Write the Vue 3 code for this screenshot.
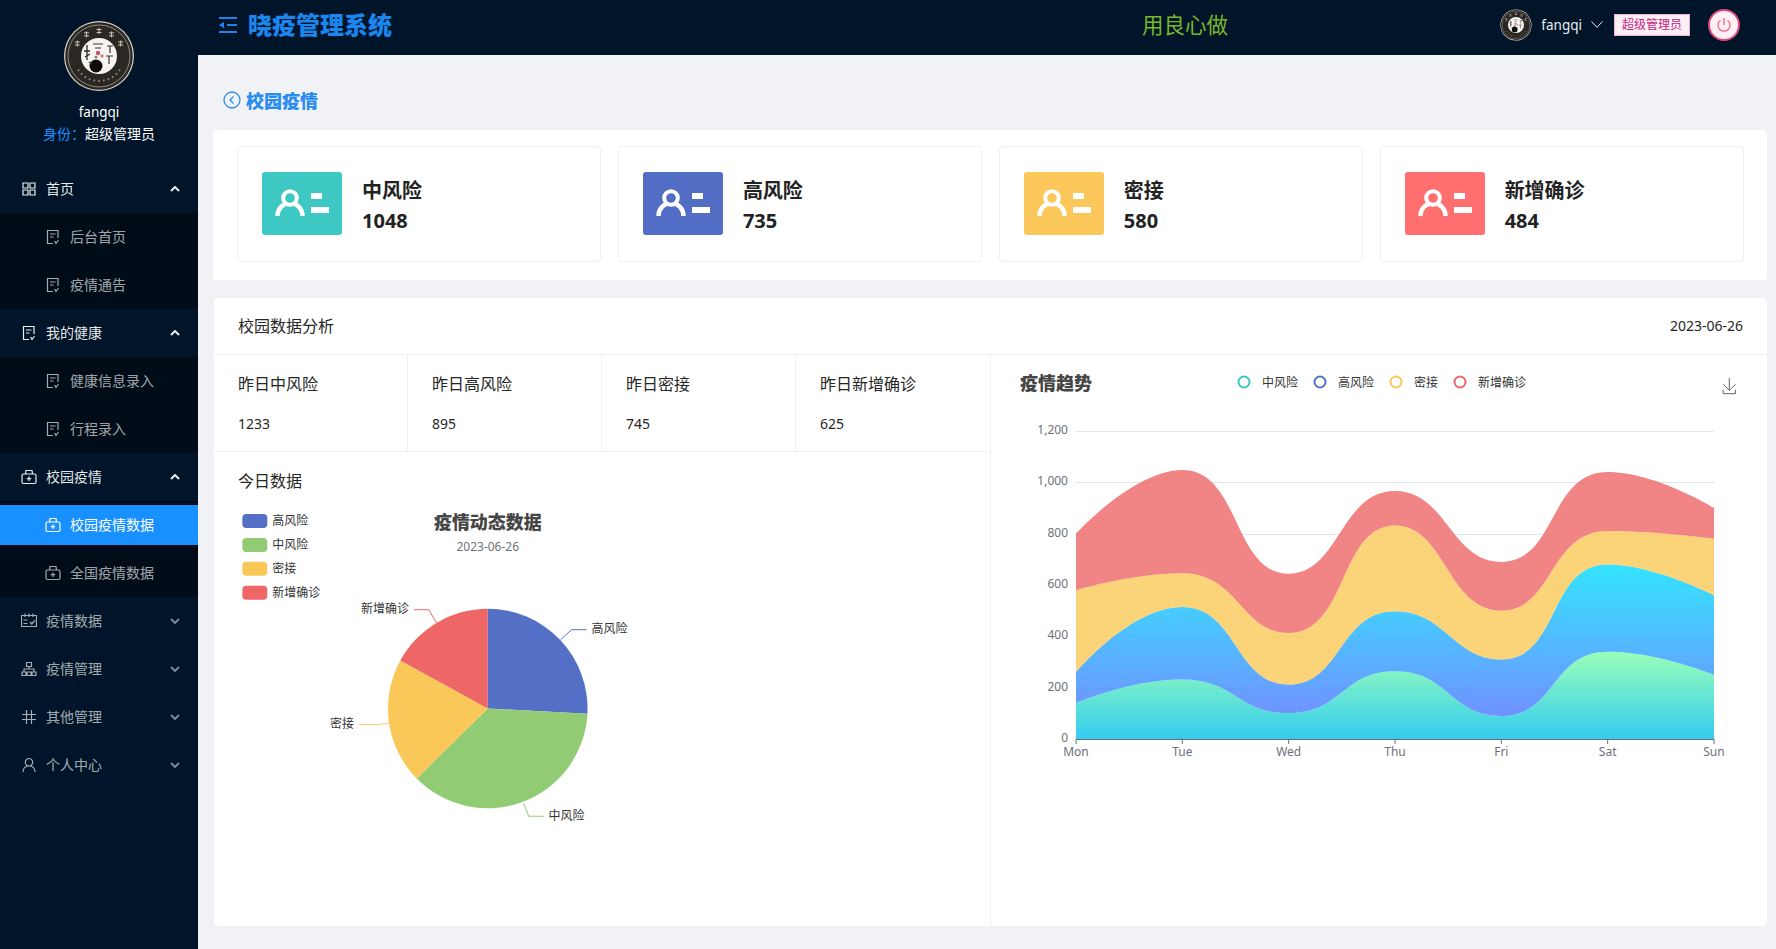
<template>
  <div class="app">
    <svg width="0" height="0" class="defs">
      <symbol id="logo" viewBox="0 0 72 72">
        <circle cx="36" cy="36" r="35" fill="#d8d4cc" />
        <circle cx="36" cy="36" r="33.800" fill="#2b2723" />
        <circle cx="36" cy="36" r="31" fill="none" stroke="#b9b4aa" stroke-width="0.7" />
        <path v-for="m in logoMarks" :key="m.id" :d="m.d" fill="none" stroke="#c9c4b8" stroke-width="1" />
        <circle v-for="d in logoDots" :key="d.id" :cx="d.x" :cy="d.y" r="1" fill="#8f8a80" />
        <circle cx="36" cy="36" r="18" fill="#f7f5f0" />
        <circle cx="33" cy="46" r="6.500" fill="#0d0c0b" />
        <path d="M24 25v15M21 31h6M22 37l5-3M26 42l3 2" stroke="#2e2a26" stroke-width="1.300" fill="none" />
        <path d="M44 26h6M47 26v7M43 36h7M46 36v8" stroke="#3a352f" stroke-width="1.200" fill="none" />
        <path d="M30 24h10M32 28h6" stroke="#3a352f" stroke-width="1" fill="none" />
        <circle cx="35" cy="33" r="2.200" fill="#b9566a" />
        <circle cx="39" cy="36" r="1.800" fill="#c9848f" />
        <circle cx="33" cy="37" r="1.600" fill="#6d9a63" />
      </symbol>
    </svg>

    <aside class="sidebar">
      <div class="profile">
        <svg class="profile-logo"><use href="#logo" /></svg>
        <div class="profile-name">fangqi</div>
        <div class="profile-role"><span>身份：</span>超级管理员</div>
      </div>

      <template v-for="group in menu" :key="group.title">
        <div class="menu-row" :class="{ open: group.children }">
          <svg class="menu-icon" viewBox="0 0 16 16"><path :d="icons[group.icon]" /></svg>
          <span>{{ group.title }}</span>
          <svg class="chevron" viewBox="0 0 10 6"><path :d="group.children ? 'M1 5l4-4 4 4' : 'M1 1l4 4 4-4'" /></svg>
        </div>
        <div v-if="group.children" class="submenu">
          <div
            v-for="child in group.children"
            :key="child"
            class="sub-row"
            :class="{ active: child === '校园疫情数据' }"
          >
            <svg class="menu-icon" viewBox="0 0 16 16"><path :d="icons[group.icon2 || group.icon]" /></svg>
            <span>{{ child }}</span>
          </div>
        </div>
      </template>
    </aside>

    <div class="right">
      <header class="topbar">
        <svg class="fold" viewBox="0 0 18 16">
          <path d="M0 1h18M8 8h10M0 15h18" />
          <path class="fold-arrow" d="M0 8l5-3.200v6.400z" />
        </svg>
        <h1 class="sys-title">晓疫管理系统</h1>
        <div class="slogan">用良心做</div>
        <div class="user">
          <svg class="user-logo"><use href="#logo" /></svg>
          <span class="user-name">fangqi</span>
          <svg class="user-arrow" viewBox="0 0 12 7"><path d="M.5.5L6 6.300 11.500 .5" /></svg>
          <span class="role-tag">超级管理员</span>
          <div class="power">
            <svg viewBox="0 0 16 16"><path d="M8 1v7M4.500 3.300a6 6 0 1 0 7 0" /></svg>
          </div>
        </div>
      </header>

      <main class="main">
        <div class="page-title">
          <svg viewBox="0 0 18 18">
            <circle cx="9" cy="9" r="8" />
            <path d="M10.500 5.500L7 9l3.500 3.500" />
          </svg>
          <span>校园疫情</span>
        </div>

        <section class="panel stat-panel">
          <div v-for="s in stats" :key="s.name" class="stat-card">
            <div class="stat-tile" :class="s.tone">
              <svg viewBox="0 0 80 62">
                <path class="tile-body" d="M15.500 44a12.500 13 0 0 1 25 0" />
                <circle class="tile-head" cx="28" cy="26" r="6.800" />
                <rect x="49" y="21" width="11" height="6" fill="#fff" />
                <rect x="49" y="35" width="18" height="6" fill="#fff" />
              </svg>
            </div>
            <div>
              <div class="stat-name">{{ s.name }}</div>
              <div class="stat-value">{{ s.value }}</div>
            </div>
          </div>
        </section>

        <section class="panel analysis">
          <div class="analysis-head">
            <span>校园数据分析</span>
            <span class="analysis-date">2023-06-26</span>
          </div>
          <div class="analysis-body">
            <div class="analysis-left">
              <div class="yesterday">
                <div v-for="y in yesterday" :key="y.name" class="y-cell">
                  <div class="y-name">{{ y.name }}</div>
                  <div class="y-value">{{ y.value }}</div>
                </div>
              </div>
              <div class="today-title">今日数据</div>
              <svg class="pie-chart" viewBox="214 500 777 426">
                <g v-for="(l, i) in pieSlices" :key="l.name">
                  <rect x="242" :y="513 + i * 24" width="25" height="14" rx="4" :fill="l.color" />
                  <text x="272" :y="520 + i * 24" class="t12 mid">{{ l.name }}</text>
                </g>
                <text x="488" y="521" class="chart-title mid" text-anchor="middle">疫情动态数据</text>
                <text x="488" y="546" class="t12 mid grey" text-anchor="middle">2023-06-26</text>
                <path v-for="l in pieSlices" :key="l.name" :d="l.d" :fill="l.color" />
                <g v-for="l in pieSlices" :key="l.name + 'label'">
                  <path :d="l.line" fill="none" :stroke="l.color" stroke-width="1" />
                  <text :x="l.lx" :y="l.ly" class="t12 mid" :text-anchor="l.anchor">{{ l.name }}</text>
                </g>
              </svg>
            </div>

            <svg class="trend-chart" viewBox="991 355 776 571">
              <defs>
                <linearGradient id="areaGreen" x1="0" y1="0" x2="0" y2="1">
                  <stop offset="0" stop-color="rgb(128,255,165)" />
                  <stop offset="1" stop-color="rgb(1,191,236)" />
                </linearGradient>
                <linearGradient id="areaBlue" x1="0" y1="0" x2="0" y2="1">
                  <stop offset="0" stop-color="rgb(0,221,255)" />
                  <stop offset="1" stop-color="rgb(77,119,255)" />
                </linearGradient>
              </defs>
              <text x="1020" y="383" class="chart-title mid">疫情趋势</text>
              <g v-for="l in trendLegend" :key="l.name">
                <circle :cx="l.x" cy="382" r="5.500" fill="#fff" :stroke="l.color" stroke-width="2" />
                <text :x="l.x + 18" y="382" class="t12 mid">{{ l.name }}</text>
              </g>
              <path
                class="download"
                transform="translate(1722 378) scale(0.25 0.27)"
                d="M4.700,22.900L29.300,45.500L54.700,23.400M4.600,43.600L4.600,58L53.800,58L53.800,43.600M29.200,45.100L29.200,0"
              />
              <g v-for="t in yTicks" :key="t.label">
                <line v-if="t.value" x1="1076" :y1="t.y" x2="1714" :y2="t.y" stroke="#e0e6f1" />
                <text x="1068" :y="t.y - 2" class="t12 mid grey" text-anchor="end">{{ t.label }}</text>
              </g>
              <path v-for="a in areas" :key="a.id" :d="a.d" :fill="a.fill" opacity="0.8" />
              <line x1="1076" y1="739.500" x2="1714" y2="739.500" stroke="#6e7079" />
              <g v-for="t in xTicks" :key="t.label">
                <line :x1="t.x" y1="739" :x2="t.x" y2="744" stroke="#6e7079" />
                <text :x="t.x" y="751" class="t12 mid grey" text-anchor="middle">{{ t.label }}</text>
              </g>
            </svg>
          </div>
        </section>
      </main>
    </div>
  </div>
</template>

<script setup>
const icons = {
  grid: "M2 2h5v5H2zM9 2h5v5H9zM2 9h5v5H2zM9 9h5v5H9z",
  doc: "M13 9V1.500H2.500v13H8M5 5h5.500M5 8h3.500M9.500 12l1.500 2.500 2.500-3.500",
  bag: "M2.500 5h11a1.500 1.500 0 0 1 1.500 1.500v6.500a1.500 1.500 0 0 1-1.500 1.500h-11A1.500 1.500 0 0 1 1 13V6.500A1.500 1.500 0 0 1 2.500 5zM4.500 5l.5-3.500h6l.5 3.500M8 7.500v4.500M5.800 9.700h4.400",
  schedule: "M.5 2.500h15v11H.5zM4 .5v3.500M8 .5v3.500M12 .5v3.500M2.500 7h4M2.500 10.500h4M9 9l1.800 2 3-3.500",
  tree: "M5.500 1.500h5v4h-5zM8 5.500V8M3 11V8h10v3M1 11h4v3.500H1zM6 11h4v3.500H6zM11 11h4v3.500h-4z",
  hash: "M5.500 1v14M10.500 1v14M1 5.500h14M1 10.500h14",
  user: "M8 1.500a3.700 3.700 0 1 1 0 7.400 3.700 3.700 0 0 1 0-7.400zM2 15c0-3.800 2.700-6.100 6-6.100s6 2.300 6 6.100",
};

const menu = [
  { title: "首页", icon: "grid", icon2: "doc", children: ["后台首页", "疫情通告"] },
  { title: "我的健康", icon: "doc", children: ["健康信息录入", "行程录入"] },
  { title: "校园疫情", icon: "bag", children: ["校园疫情数据", "全国疫情数据"] },
  { title: "疫情数据", icon: "schedule" },
  { title: "疫情管理", icon: "tree" },
  { title: "其他管理", icon: "hash" },
  { title: "个人中心", icon: "user" },
];

const stats = [
  { name: "中风险", value: 1048, tone: "teal" },
  { name: "高风险", value: 735, tone: "blue" },
  { name: "密接", value: 580, tone: "yellow" },
  { name: "新增确诊", value: 484, tone: "red" },
];

const yesterday = [
  { name: "昨日中风险", value: 1233 },
  { name: "昨日高风险", value: 895 },
  { name: "昨日密接", value: 745 },
  { name: "昨日新增确诊", value: 625 },
];

// little crosses standing in for the seal characters on the logo ring
const logoMarks = [-150, -120, -90, -60, -30].map((deg, i) => {
  const a = (deg * Math.PI) / 180;
  const x = 36 + Math.cos(a) * 25;
  const y = 36 + Math.sin(a) * 25;
  return {
    id: i,
    d: `M${x - 2.5} ${y - 1.5}h5M${x - 2.5} ${y + 1.5}h5M${x} ${y - 3}v6`,
  };
});
const logoDots = Array.from({ length: 11 }, (_, i) => {
  const a = ((35 + i * 11) * Math.PI) / 180;
  return { id: i, x: 36 + Math.cos(a) * 25, y: 36 + Math.sin(a) * 25 };
});

// pie
const cx = 488;
const cy = 708;
const radius = 100;
const pieData = [
  { name: "高风险", value: 735, color: "#5470c6", line: "M561 639L572 629H587", lx: 592, ly: 628, anchor: "start" },
  { name: "中风险", value: 1048, color: "#91cc75", line: "M524 803L529 816H544", lx: 549, ly: 815, anchor: "start" },
  { name: "密接", value: 580, color: "#fac858", line: "M389 723L375 724H359", lx: 354, ly: 723, anchor: "end" },
  { name: "新增确诊", value: 484, color: "#ee6666", line: "M437 623L429 609H414", lx: 409, ly: 608, anchor: "end" },
];
const pieTotal = pieData.reduce((sum, p) => sum + p.value, 0);
let pieAngle = -Math.PI / 2;
const pieSlices = pieData.map((p) => {
  const start = pieAngle;
  pieAngle += (p.value / pieTotal) * Math.PI * 2;
  const large = pieAngle - start > Math.PI ? 1 : 0;
  const d =
    `M${cx} ${cy}L${cx + radius * Math.cos(start)} ${cy + radius * Math.sin(start)}` +
    `A${radius} ${radius} 0 ${large} 1 ${cx + radius * Math.cos(pieAngle)} ${cy + radius * Math.sin(pieAngle)}Z`;
  return { ...p, d };
});

// stacked area
const x0 = 1076;
const xStep = (1714 - 1076) / 6;
const yZero = 739;
const yPerUnit = 308 / 1200;
const toY = (v) => yZero - v * yPerUnit;

const days = ["Mon", "Tue", "Wed", "Thu", "Fri", "Sat", "Sun"];
const xTicks = days.map((label, i) => ({ label, x: x0 + i * xStep }));
const yTicks = [0, 200, 400, 600, 800, 1000, 1200].map((value) => ({
  value,
  label: value.toLocaleString("en-US"),
  y: Math.round(toY(value)) + 0.5,
}));

const trendLegend = [
  { name: "中风险", color: "#3cc8c2", x: 1244 },
  { name: "高风险", color: "#5470c6", x: 1320 },
  { name: "密接", color: "#fac858", x: 1396 },
  { name: "新增确诊", color: "#ee6666", x: 1460 },
];

const clamp = (v, a, b) => Math.min(Math.max(v, Math.min(a, b)), Math.max(a, b));

// same control points a smooth line gets in the chart library the original used
function smoothSegments(pts, smooth = 0.5) {
  let out = "";
  let cp0x = pts[0][0];
  let cp0y = pts[0][1];
  for (let i = 1; i < pts.length; i++) {
    const [x, y] = pts[i];
    const [px, py] = pts[i - 1];
    let cp1x = x;
    let cp1y = y;
    let nextX = x;
    let nextY = y;
    const next = pts[i + 1];
    if (next) {
      const lenPrev = Math.hypot(x - px, y - py);
      const lenNext = Math.hypot(next[0] - x, next[1] - y);
      const ratio = lenNext / (lenNext + lenPrev);
      const vx = next[0] - px;
      const vy = next[1] - py;
      nextX = clamp(x + vx * smooth * ratio, x, next[0]);
      nextY = clamp(y + vy * smooth * ratio, y, next[1]);
      cp1x = clamp(x - ((nextX - x) * lenPrev) / lenNext, px, x);
      cp1y = clamp(y - ((nextY - y) * lenPrev) / lenNext, py, y);
      nextX = x + ((x - cp1x) * lenNext) / lenPrev;
      nextY = y + ((y - cp1y) * lenNext) / lenPrev;
    }
    out += `C${cp0x} ${cp0y} ${cp1x} ${cp1y} ${x} ${y}`;
    cp0x = nextX;
    cp0y = nextY;
  }
  return out;
}

const series = [
  { data: [140, 232, 101, 264, 90, 340, 250], fill: "url(#areaGreen)" },
  { data: [120, 282, 111, 234, 220, 340, 310], fill: "url(#areaBlue)" },
  { data: [320, 132, 201, 334, 190, 130, 220], fill: "#fac858" },
  { data: [220, 402, 231, 134, 190, 230, 120], fill: "#ee6666" },
];

const stacked = [];
series.forEach((s, si) => {
  stacked.push(s.data.map((v, i) => v + (si ? stacked[si - 1][i] : 0)));
});

const areas = series.map((s, si) => {
  const top = stacked[si].map((v, i) => [x0 + i * xStep, toY(v)]);
  const bottom = si
    ? stacked[si - 1].map((v, i) => [x0 + i * xStep, toY(v)]).reverse()
    : [[1714, yZero], [x0, yZero]];
  const back = si ? smoothSegments(bottom) : `L${x0} ${yZero}`;
  return {
    id: si,
    fill: s.fill,
    d: `M${top[0][0]} ${top[0][1]}${smoothSegments(top)}L${bottom[0][0]} ${bottom[0][1]}${back}Z`,
  };
});
</script>

<style scoped>
.app {
  display: flex;
  height: 949px;
  overflow: hidden;
  font-family: "Noto Sans", "Noto Sans CJK SC", sans-serif;
  font-size: 14px;
  color: #262626;
  background: #f0f2f5;
}
.defs {
  position: absolute;
}

/* sidebar */
.sidebar {
  width: 198px;
  flex-shrink: 0;
  background: #001529;
  color: rgba(255, 255, 255, 0.65);
}
.profile {
  height: 165px;
  padding-top: 20px;
  box-sizing: border-box;
  text-align: center;
  line-height: 22px;
  color: #fff;
}
.profile-logo {
  display: block;
  width: 72px;
  height: 72px;
  margin: 0 auto 9px;
}
.profile-name {
  font-size: 13.500px;
}
.profile-role span {
  color: #1890ff;
}
.menu-row {
  display: flex;
  align-items: center;
  height: 48px;
  padding-left: 21px;
}
.menu-row span,
.sub-row span {
  margin-bottom: 2px;
}
.menu-row.open {
  color: rgba(255, 255, 255, 0.92);
}
.menu-icon {
  width: 16px;
  height: 16px;
  margin-right: 9px;
  flex-shrink: 0;
  fill: none;
  stroke: currentColor;
  stroke-width: 1.200;
}
.chevron {
  width: 10px;
  height: 6px;
  margin-left: auto;
  margin-right: 18px;
  fill: none;
  stroke: currentColor;
  stroke-width: 2;
  opacity: 0.75;
}
.menu-row.open .chevron {
  opacity: 1;
}
.submenu {
  display: flex;
  flex-direction: column;
  background: #000c17;
}
.sub-row {
  display: flex;
  align-items: center;
  height: 40px;
  margin: 4px 0;
  padding-left: 45px;
}
.sub-row.active {
  background: #1890ff;
  color: #fff;
}

/* top bar */
.right {
  flex: 1;
  min-width: 0;
  display: flex;
  flex-direction: column;
}
.topbar {
  display: flex;
  align-items: center;
  box-sizing: border-box;
  height: 55px;
  flex-shrink: 0;
  padding: 0 36px 6px 21px;
  background: #001529;
}
.fold {
  width: 18px;
  height: 16px;
  margin-right: 11px;
  fill: none;
  stroke: #1c84e8;
  stroke-width: 2;
}
.fold-arrow {
  fill: #1c84e8;
  stroke: none;
}
.sys-title {
  margin: 0;
  font-size: 24px;
  line-height: 49px;
  font-weight: 900;
  color: #1a86ee;
}
.slogan {
  margin: 0 0 2px 750px;
  font-size: 21.500px;
  color: #79b52a;
}
.user {
  display: flex;
  align-items: center;
  margin-left: auto;
}
.user-logo {
  width: 32px;
  height: 32px;
  margin-right: 9px;
}
.user-name {
  font-size: 13.500px;
  color: #e8edf2;
}
.user-arrow {
  width: 12px;
  height: 7px;
  margin: 0 11px 0 9px;
  fill: none;
  stroke: #e8edf2;
}
.role-tag {
  box-sizing: border-box;
  width: 76px;
  height: 22px;
  line-height: 20px;
  text-align: center;
  font-size: 12px;
  color: #c41d7f;
  background: #fff0f6;
  border: 1px solid #ffadd2;
}
.power {
  box-sizing: border-box;
  display: flex;
  align-items: center;
  justify-content: center;
  width: 32px;
  height: 32px;
  margin-left: 18px;
  border-radius: 50%;
  background: #fff0f6;
  border: 2px solid #dc4a7c;
}
.power svg {
  width: 16px;
  height: 16px;
  fill: none;
  stroke: #ee6f8f;
  stroke-width: 1.400;
}

/* content */
.main {
  flex: 1;
  min-height: 0;
  padding: 0 9px 0 15px;
}
.page-title {
  display: flex;
  align-items: center;
  height: 75px;
  padding: 15px 0 0 10px;
  box-sizing: border-box;
  font-size: 18px;
  font-weight: 900;
  color: #2a8cf0;
}
.page-title svg {
  width: 18px;
  height: 18px;
  margin-right: 5px;
  fill: none;
  stroke: currentColor;
  stroke-width: 1.300;
}
.panel {
  background: #fff;
  border-radius: 4px;
}
.stat-panel {
  display: grid;
  grid-template-columns: repeat(4, 1fr);
  gap: 16.500px;
  height: 150px;
  box-sizing: border-box;
  padding: 16px 23px 18px 24px;
}
.stat-card {
  display: flex;
  align-items: center;
  padding-left: 24px;
  border: 1px solid #f0f0f0;
  border-radius: 4px;
}
.stat-tile {
  width: 80px;
  height: 63px;
  margin: 0 20px 2px 0;
  border-radius: 3px;
}
.stat-tile svg {
  display: block;
  width: 80px;
  height: 62px;
}
.tile-body {
  fill: none;
  stroke: #fff;
  stroke-width: 4.500;
}
.tile-head {
  stroke: #fff;
  stroke-width: 4;
}
.teal {
  background: #3ec8c4;
}
.teal .tile-head {
  fill: #3ec8c4;
}
.blue {
  background: #516dc4;
}
.blue .tile-head {
  fill: #516dc4;
}
.yellow {
  background: #fcc75a;
}
.yellow .tile-head {
  fill: #fcc75a;
}
.red {
  background: #ff6f6f;
}
.red .tile-head {
  fill: #ff6f6f;
}
.stat-name {
  padding-top: 2px;
  font-size: 20px;
  line-height: 32px;
  font-weight: 700;
  color: #222;
}
.stat-value {
  font-size: 20px;
  line-height: 28px;
  font-weight: 700;
  color: #222;
}
.analysis {
  display: flex;
  flex-direction: column;
  height: 628px;
  margin: 18px 0 0 1px;
}
.analysis-head {
  display: flex;
  align-items: center;
  justify-content: space-between;
  height: 57px;
  flex-shrink: 0;
  box-sizing: border-box;
  padding: 0 24px 2px 24px;
  font-size: 16px;
  border-bottom: 1px solid #f0f0f0;
}
.analysis-date {
  font-size: 14px;
}
.analysis-body {
  display: flex;
  flex: 1;
  min-height: 0;
}
.analysis-left {
  display: flex;
  flex-direction: column;
  width: 777px;
  flex-shrink: 0;
  box-sizing: border-box;
  border-right: 1px solid #f0f0f0;
}
.yesterday {
  display: grid;
  grid-template-columns: repeat(4, 1fr);
  height: 96px;
  flex-shrink: 0;
  border-bottom: 1px solid #f0f0f0;
}
.y-cell {
  padding: 17px 0 0 24px;
  border-right: 1px solid #f0f0f0;
}
.y-cell:last-child {
  border-right: 0;
}
.y-name {
  font-size: 16px;
  line-height: 24px;
}
.y-value {
  margin-top: 16px;
  line-height: 24px;
}
.today-title {
  height: 49px;
  flex-shrink: 0;
  box-sizing: border-box;
  padding: 17px 0 0 24px;
  font-size: 16px;
  line-height: 24px;
}
.pie-chart {
  display: block;
  width: 776px;
  height: 426px;
}
.trend-chart {
  display: block;
  width: 776px;
  height: 571px;
}
.t12 {
  font-size: 12px;
  fill: #333;
}
.grey {
  fill: #6e7079;
}
.mid {
  dominant-baseline: central;
}
.chart-title {
  font-size: 18px;
  font-weight: 900;
  fill: #464646;
}
.download {
  fill: none;
  stroke: #666;
  stroke-width: 1;
  vector-effect: non-scaling-stroke;
}
</style>

<style>
html,
body {
  margin: 0;
  background: #f0f2f5;
}
</style>
